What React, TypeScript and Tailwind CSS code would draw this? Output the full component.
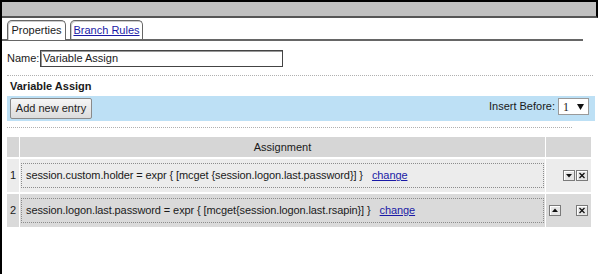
import React from "react";

const font = { fontFamily: '"Liberation Sans", Arial, sans-serif' };

function MiniButton({ kind }: { kind: "up" | "down" | "x" }) {
  return (
    <div className="w-[12px] h-[11px] border border-[#7a7a7a] bg-[#e6e6e6] shadow-[inset_1px_1px_0_#fff] flex items-center justify-center">
      <svg width="8" height="7" viewBox="0 0 8 7">
        {kind === "down" && <path d="M1 2 H7 L4 5.5 Z" fill="#111" />}
        {kind === "up" && <path d="M1 5 H7 L4 1.5 Z" fill="#111" />}
        {kind === "x" && <path d="M1.5 1 L6.5 6 M6.5 1 L1.5 6" stroke="#111" strokeWidth="1.3" />}
      </svg>
    </div>
  );
}

const rows = [
  {
    n: 1,
    text: "session.custom.holder = expr { [mcget {session.logon.last.password}] }",
    bg: "bg-[#ececec]",
    first: true,
  },
  {
    n: 2,
    text: "session.logon.last.password = expr { [mcget{session.logon.last.rsapin}] }",
    bg: "bg-[#dadada]",
    first: false,
  },
];

export default function App() {
  return (
    <div className="w-[600px] h-[274px] bg-white border-l-2 border-black overflow-hidden text-[11px] text-[#1a1a1a]" style={font}>
      {/* title bar */}
      <div className="h-[18px] mr-[2px] bg-[#c0c0c0] border-t-2 border-r-2 border-black border-b-2 border-b-[#555]" />

      {/* tabs */}
      <div className="mt-[2px] w-[581px] pl-[5px] flex items-end gap-[4px] h-[21px] border-b-2 border-[#666]">
        <div className="h-[20px] w-[59px] -mb-[1px] bg-white border border-b-0 border-[#666] rounded-t-[5px] shadow-[inset_1px_1px_0_#ccc] flex items-center justify-center">
          Properties
        </div>
        <div className="h-[19px] w-[73px] bg-white border border-b-0 border-[#666] rounded-t-[5px] shadow-[inset_1px_1px_0_#ccc] flex items-center justify-center">
          <span className="text-[#1a1aa6] underline">Branch Rules</span>
        </div>
      </div>

      {/* name */}
      <div className="mt-[9px] pl-[5px] flex items-center h-[17px]">
        <span className="w-[33px]">Name:</span>
        <div className="w-[243px] h-[17px] border border-[#444] shadow-[inset_1px_1px_0_#999] flex items-center pl-[2px]">
          Variable Assign
        </div>
      </div>

      <div className="mt-[8px] ml-[5px] w-[586px] border-t border-dotted border-[#b0b0b0]" />

      <div className="mt-[3px] pl-[8px] h-[14px] leading-[14px] font-bold">Variable Assign</div>

      {/* blue band */}
      <div className="mt-[3px] ml-[5px] w-[588px] h-[25px] bg-[#bde0f5] flex items-center justify-between pl-[3px] pr-[6px]">
        <div className="w-[82px] h-[21px] border border-[#8a8a8a] rounded-[2px] bg-gradient-to-b from-[#f6f6f6] to-[#dcdcdc] flex items-center justify-center text-[#222]">
          Add new entry
        </div>
        <div className="flex items-center gap-[3px] -mt-[4px]">
          <span>Insert Before:</span>
          <div className="w-[31px] h-[17px] bg-white border border-[#9a9a9a] flex items-center justify-between pl-[4px] pr-[4px]">
            <span className="text-[12px]" style={{ fontFamily: '"Liberation Serif", serif' }}>1</span>
            <svg width="7" height="6" viewBox="0 0 7 6">
              <path d="M0 0 H7 L3.5 6 Z" fill="#111" />
            </svg>
          </div>
        </div>
      </div>

      <div className="mt-[6px] ml-[5px] w-[565px] border-t border-dotted border-[#b0b0b0]" />

      {/* table */}
      <div className="mt-[9px] ml-[5px] w-[584px] grid grid-cols-[12px_525px_45px] gap-x-[1px] gap-y-[2px]">
        <div className="h-[20px] bg-[#d6d6d6]" />
        <div className="h-[20px] bg-[#d6d6d6] flex items-center justify-center">Assignment</div>
        <div className="h-[20px] bg-[#d6d6d6]" />
        {rows.map((r) => (
          <React.Fragment key={r.n}>
            <div className={`h-[33px] ${r.bg} flex items-center justify-center`}>{r.n}</div>
            <div className={`h-[33px] ${r.bg} flex items-center px-[1px]`}>
              <div className="w-full h-[25px] border border-dotted border-[#8c8c8c] flex items-center pl-[4px] tracking-[-0.1px]">
                <span>{r.text}</span>
                <span className="ml-[9px] text-[#1a1aa6] underline">change</span>
              </div>
            </div>
            <div className={`h-[33px] ${r.bg} flex items-center pl-[3px]`}>
              {r.first ? (
                <div className="flex gap-[1px] ml-[14px]">
                  <MiniButton kind="down" />
                  <MiniButton kind="x" />
                </div>
              ) : (
                <div className="flex gap-[15px]">
                  <MiniButton kind="up" />
                  <MiniButton kind="x" />
                </div>
              )}
            </div>
          </React.Fragment>
        ))}
      </div>
    </div>
  );
}
